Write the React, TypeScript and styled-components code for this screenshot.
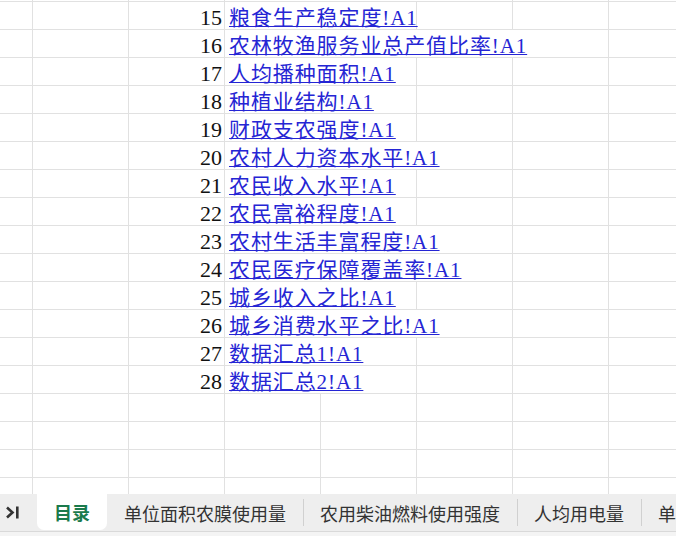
import React, { useLayoutEffect, useRef } from "react";
import styled, { createGlobalStyle } from "styled-components";

const Global = createGlobalStyle`
  html, body { margin: 0; padding: 0; background: #ffffff; }
  body { font-family: "Noto Sans CJK SC", "Noto Sans", sans-serif; }
  * { box-sizing: border-box; }
`;

const Page = styled.div`
  width: 676px;
  height: 536px;
  display: flex;
  flex-direction: column;
  overflow: hidden;
  background: #ffffff;
`;

const Sheet = styled.div`
  flex: 1;
  overflow: hidden;
`;

const Row = styled.div`
  display: grid;
  grid-template-columns: 33px repeat(7, 96px);
  height: 28px;
  border-bottom: 1px solid #e1e1e1;
`;

const Cell = styled.div<{ $span?: number }>`
  grid-column: span ${(p) => p.$span ?? 1};
  border-right: 1px solid #e1e1e1;
  display: flex;
  align-items: flex-end;
  white-space: nowrap;
  min-width: 0;
`;

const NumCell = styled(Cell)`
  justify-content: flex-end;
  padding-right: 2px;
  font-family: "Liberation Serif", serif;
  font-size: 22px;
  line-height: 1;
  color: #111111;
`;

const LinkCell = styled(Cell)`
  padding-left: 4px;
  overflow: visible;
`;

const Link = styled.span`
  font-family: "Liberation Serif", "Noto Sans CJK SC", serif;
  font-size: 21px;
  line-height: 1;
  letter-spacing: 0.9px;
  color: #2525d4;
  text-decoration: underline;
  text-decoration-thickness: 1px;
  text-underline-offset: 1px;
`;

const TabBar = styled.div`
  height: 37px;
  display: flex;
  align-items: stretch;
  background: #eeeeee;
  flex-shrink: 0;
  white-space: nowrap;
`;

const NavButton = styled.div`
  width: 37px;
  display: flex;
  align-items: center;
  justify-content: center;
  padding-right: 13px;
  color: #333333;
  flex-shrink: 0;
`;

const Tab = styled.div<{ $active?: boolean; $sep?: boolean }>`
  position: relative;
  display: flex;
  align-items: center;
  padding: 0 17px;
  flex-shrink: 0;
  font-size: 18px;
  font-weight: ${(p) => (p.$active ? 700 : 400)};
  color: ${(p) => (p.$active ? "#1a7a4c" : "#333333")};
  background: ${(p) => (p.$active ? "#ffffff" : "transparent")};
  border-radius: ${(p) => (p.$active ? "0 0 7px 7px" : "0")};
  margin-bottom: ${(p) => (p.$active ? "1px" : "0")};
  ${(p) =>
    p.$sep
      ? `
  &::before {
    content: "";
    position: absolute;
    left: 0;
    top: 5px;
    bottom: 5px;
    width: 1px;
    background: #d0d0d0;
  }`
      : ""}
`;

const Footer = styled.div`
  height: 5px;
  flex-shrink: 0;
  border-top: 1px solid #d9d9d9;
  background: #f4f4f4;
`;

type Entry = { n: number; text: string; span: number };

const entries: Entry[] = [
  { n: 14, text: "农业机械化作业率!A1", span: 3 },
  { n: 15, text: "粮食生产稳定度!A1", span: 2 },
  { n: 16, text: "农林牧渔服务业总产值比率!A1", span: 4 },
  { n: 17, text: "人均播种面积!A1", span: 2 },
  { n: 18, text: "种植业结构!A1", span: 2 },
  { n: 19, text: "财政支农强度!A1", span: 2 },
  { n: 20, text: "农村人力资本水平!A1", span: 3 },
  { n: 21, text: "农民收入水平!A1", span: 2 },
  { n: 22, text: "农民富裕程度!A1", span: 2 },
  { n: 23, text: "农村生活丰富程度!A1", span: 3 },
  { n: 24, text: "农民医疗保障覆盖率!A1", span: 3 },
  { n: 25, text: "城乡收入之比!A1", span: 2 },
  { n: 26, text: "城乡消费水平之比!A1", span: 3 },
  { n: 27, text: "数据汇总1!A1", span: 2 },
  { n: 28, text: "数据汇总2!A1", span: 2 },
];

const TOTAL_COLS = 8;
const LEAD_COLS = 2;

const tabs = ["目录", "单位面积农膜使用量", "农用柴油燃料使用强度", "人均用电量", "单位面积化肥使用量"];

function LastIcon() {
  return (
    <svg width="15" height="15" viewBox="0 0 15 15" fill="none">
      <path d="M2 2.5 L7.5 7.5 L2 12.5" stroke="#333" strokeWidth="2.6" strokeLinejoin="miter" />
      <rect x="11" y="1.5" width="2.6" height="12" fill="#333" />
    </svg>
  );
}

export default function App() {
  const sheetRef = useRef<HTMLDivElement>(null);
  useLayoutEffect(() => {
    if (sheetRef.current) sheetRef.current.scrollTop = 26;
  }, []);

  return (
    <Page>
      <Global />
      <Sheet ref={sheetRef}>
        {entries.map((e) => (
          <Row key={e.n}>
            {Array.from({ length: LEAD_COLS }).map((_, i) => (
              <Cell key={"l" + i} />
            ))}
            <NumCell>{e.n}</NumCell>
            <LinkCell $span={e.span}>
              <Link>{e.text}</Link>
            </LinkCell>
            {Array.from({ length: TOTAL_COLS - LEAD_COLS - 1 - e.span }).map((_, i) => (
              <Cell key={"t" + i} />
            ))}
          </Row>
        ))}
        {Array.from({ length: 5 }).map((_, r) => (
          <Row key={"empty" + r}>
            {Array.from({ length: TOTAL_COLS }).map((_, i) => (
              <Cell key={i} />
            ))}
          </Row>
        ))}
      </Sheet>
      <TabBar>
        <NavButton>
          <LastIcon />
        </NavButton>
        {tabs.map((t, i) => (
          <Tab key={t} $active={i === 0} $sep={i > 1}>
            {t}
          </Tab>
        ))}
      </TabBar>
      <Footer />
    </Page>
  );
}
